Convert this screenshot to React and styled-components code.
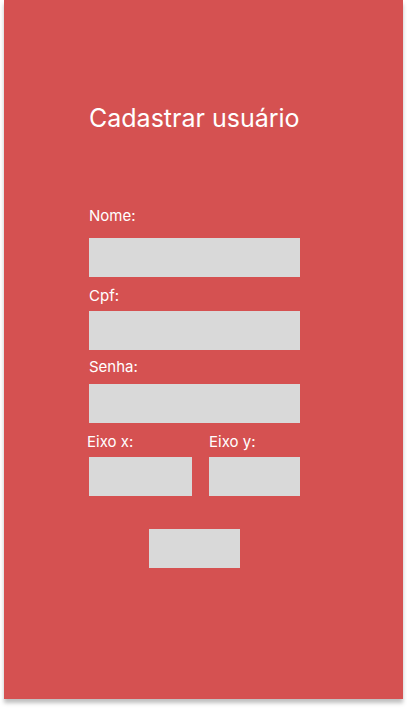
import React from "react";
import styled, { createGlobalStyle } from "styled-components";

const GlobalStyle = createGlobalStyle`
  html, body { margin: 0; padding: 0; background: #ffffff; }
  body { font-family: Inter, "Noto Sans", sans-serif; }
`;

const Page = styled.div`
  padding: 0 0 0 4px;
  width: 407px;
  height: 708px;
  box-sizing: border-box;
`;

const Panel = styled.main`
  width: 399px;
  height: 699px;
  background: #d55151;
  box-shadow: 0 4px 4px rgba(0, 0, 0, 0.25);
  box-sizing: border-box;
  padding: 103px 0 0 85px;
`;

const Form = styled.form`
  width: 211px;
  display: flex;
  flex-direction: column;
`;

const Title = styled.h1`
  margin: 0;
  font-family: Inter, sans-serif;
  font-weight: 400;
  font-size: 25px;
  line-height: 30px;
  color: #ffffff;
  white-space: nowrap;
`;

const Label = styled.label`
  display: block;
  font-family: Inter, sans-serif;
  font-size: 15px;
  line-height: 18px;
  color: #ffffff;
  margin-top: ${(p) => p.$top}px;
  margin-bottom: ${(p) => p.$bottom}px;
  margin-left: ${(p) => p.$shift || 0}px;
  white-space: nowrap;
`;

const Input = styled.div`
  height: 39px;
  background: #d9d9d9;
`;

const Row = styled.div`
  display: grid;
  grid-template-columns: 103px 91px;
  column-gap: 17px;
`;

const Col = styled.div`
  display: flex;
  flex-direction: column;
`;

const Submit = styled.div`
  align-self: center;
  width: 91px;
  height: 39px;
  margin-top: 33px;
  background: #d9d9d9;
`;

export default function App() {
  return (
    <>
      <GlobalStyle />
      <Page>
        <Panel>
          <Form>
            <Title>Cadastrar usuário</Title>
            <Label $top={74} $bottom={13}>Nome:</Label>
            <Input />
            <Label $top={10} $bottom={6}>Cpf:</Label>
            <Input />
            <Label $top={8} $bottom={8}>Senha:</Label>
            <Input />
            <Row>
              <Col>
                <Label $top={10} $bottom={6} $shift={-2}>Eixo x:</Label>
                <Input />
              </Col>
              <Col>
                <Label $top={10} $bottom={6}>Eixo y:</Label>
                <Input />
              </Col>
            </Row>
            <Submit />
          </Form>
        </Panel>
      </Page>
    </>
  );
}
